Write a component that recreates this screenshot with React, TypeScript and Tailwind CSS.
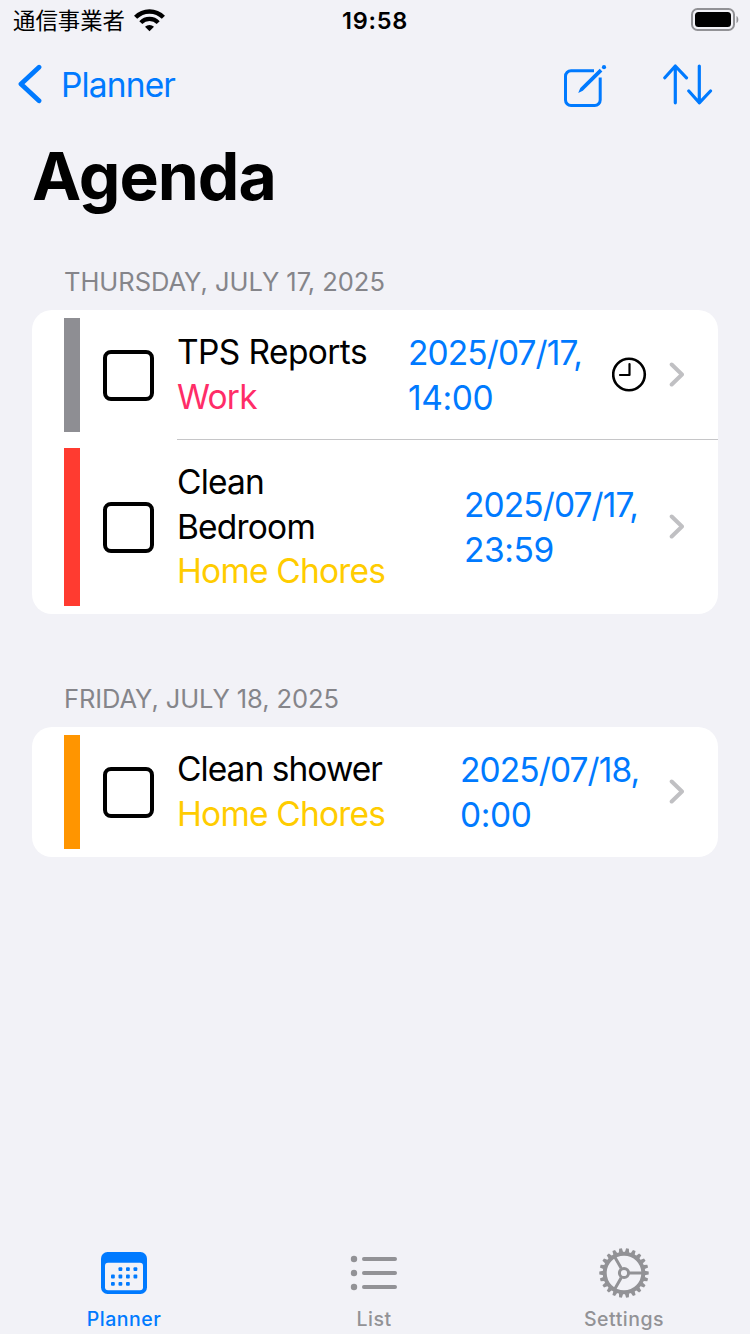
import type { ReactNode } from "react";

type Task = {
  title: string;
  list: string;
  listColor: string;
  barColor: string;
  titleWidth: string;
  titleTracking: string;
  day: string;
  time: string;
  hasAlarm?: boolean;
};

type Section = {
  label: string;
  labelClass: string;
  tasks: Task[];
};

const sections: Section[] = [
  {
    label: "THURSDAY, JULY 17, 2025",
    labelClass: "pt-[57px] tracking-[-0.04px]",
    tasks: [
      {
        title: "TPS Reports",
        list: "Work",
        listColor: "text-[#ff2d68]",
        barColor: "bg-[#8e8e93]",
        titleWidth: "w-[231px]",
        titleTracking: "tracking-[-0.6px]",
        day: "2025/07/17,",
        time: "14:00",
        hasAlarm: true,
      },
      {
        title: "Clean Bedroom",
        list: "Home Chores",
        listColor: "text-[#ffcc00]",
        barColor: "bg-[#ff3b30]",
        titleWidth: "w-[287px]",
        titleTracking: "tracking-[-0.8px]",
        day: "2025/07/17,",
        time: "23:59",
      },
    ],
  },
  {
    label: "FRIDAY, JULY 18, 2025",
    labelClass: "pt-[70px] tracking-[-0.1px]",
    tasks: [
      {
        title: "Clean shower",
        list: "Home Chores",
        listColor: "text-[#ffcc00]",
        barColor: "bg-[#ff9500]",
        titleWidth: "w-[283px]",
        titleTracking: "tracking-[-0.95px]",
        day: "2025/07/18,",
        time: "0:00",
      },
    ],
  },
];

const StatusBar = () => (
  <div className="grid h-10 grid-cols-3 items-center">
    <div className="flex items-center gap-[9px] pl-[13px]">
      <span className="pb-0.5 font-['Noto_Sans_CJK_JP',sans-serif] text-[22.4px] leading-9">
        通信事業者
      </span>
      <svg width="31" height="23" viewBox="0 0 31 23" fill="none">
        <path d="M1.6 8.3a19.4 19.4 0 0 1 27.8 0" stroke="#000" strokeWidth="4.4" />
        <path d="M6.8 13.6a12.1 12.1 0 0 1 17.4 0" stroke="#000" strokeWidth="4.2" />
        <path d="M11 17.7a6.5 6.5 0 0 1 9 0L15.500 22.200z" fill="#000" />
      </svg>
    </div>
    <span className="pt-0.5 text-center text-[23.5px] font-semibold tracking-[0.7px]">
      19:58
    </span>
    <div className="flex justify-end pr-[11px]">
      <svg width="48" height="24" viewBox="0 0 48 24" fill="none">
        <rect x="1" y="1" width="42" height="21" rx="5.5" stroke="#929296" strokeWidth="2" />
        <rect x="4" y="4" width="36" height="15" rx="3.5" fill="#000" />
        <path d="M45.5 8c2.4 1.2 2.4 6 0 7.2z" fill="#929296" />
      </svg>
    </div>
  </div>
);

const NavBar = () => (
  <div className="flex h-[88px] items-center justify-between pr-[37px] pl-[18px] text-[#007aff]">
    <div className="flex items-center gap-[19px]">
      <svg width="24" height="40" viewBox="0 0 24 40" fill="none">
        <path
          d="M21 3.2 3 20l18 16.8"
          stroke="currentColor"
          strokeWidth="4.8"
          strokeLinecap="round"
          strokeLinejoin="round"
        />
      </svg>
      <span className="pt-0.5 text-[33.5px] leading-10 tracking-[-0.85px]">
        Planner
      </span>
    </div>
    <div className="flex items-center gap-[56px]">
      {/* compose */}
      <svg
        width="44"
        height="48"
        viewBox="0 0 44 48"
        fill="none"
        stroke="currentColor"
        strokeWidth="3"
      >
        <path d="M31 10.8H8a5.5 5.5 0 0 0-5.5 5.5V40a5.5 5.5 0 0 0 5.5 5.5h23.7a5.5 5.5 0 0 0 5.5-5.5V17.5" />
        <path
          d="m36.7 8.7 2.7 2.7L19.8 30.8l-4.6 2.1 2.1-4.8z"
          fill="currentColor"
          stroke="none"
        />
        <circle cx="41" cy="7.2" r="2.1" fill="currentColor" stroke="none" />
      </svg>
      {/* sort */}
      <svg
        width="50"
        height="42"
        viewBox="0 0 50 42"
        fill="none"
        stroke="currentColor"
        strokeWidth="3.2"
        strokeLinecap="round"
        strokeLinejoin="round"
      >
        <path d="M12.3 39.8V3M1.8 14.8 12.3 3l11.2 11.8" />
        <path d="M36.3 3v36.8M25.8 28l10.5 11.8L47.5 28" />
      </svg>
    </div>
  </div>
);

const Checkbox = () => (
  <div className="mt-px ml-[23px] size-[51px] shrink-0 rounded-[8px] border-4 border-black" />
);

const ClockIcon = () => (
  <svg
    className="mb-px ml-[30px]"
    width="35"
    height="35"
    viewBox="0 0 35 35"
    fill="none"
    stroke="#000"
    strokeWidth="2.6"
  >
    <circle cx="17" cy="17.5" r="15.8" />
    <path
      d="M17.5 7v11H8"
      strokeWidth="2.2"
      strokeLinecap="round"
      strokeLinejoin="round"
    />
  </svg>
);

const ChevronIcon = () => (
  <svg className="mb-px ml-auto" width="15" height="25" viewBox="0 0 15 25" fill="none">
    <path
      d="m2.7 2.5 10.3 10-10.300 10"
      stroke="#c0c0c3"
      strokeWidth="4"
      strokeLinecap="round"
      strokeLinejoin="round"
    />
  </svg>
);

const TaskRow = ({ task, divided }: { task: Task; divided: boolean }) => (
  <div className="flex min-h-[130px] items-stretch py-2 pl-8">
    <div className={`w-4 shrink-0 ${task.barColor}`} />
    <div className="flex items-center">
      <Checkbox />
    </div>
    {/* the divider starts at the title and runs to the card's edge */}
    <div
      className={`-my-2 ml-[23px] flex grow items-center pr-[34px] text-[33.5px] ${
        divided ? "shadow-[inset_0_-1px_0_#c6c6c8]" : ""
      }`}
    >
      <div className={`shrink-0 py-5 leading-[44.7px] ${task.titleWidth}`}>
        <p className={`max-w-[220px] ${task.titleTracking}`}>{task.title}</p>
        <p className={`tracking-[-0.8px] ${task.listColor}`}>{task.list}</p>
      </div>
      <div className="pt-0.5 leading-[45px] text-[#007aff]">
        <p className="tracking-[-0.9px]">{task.day}</p>
        <p className="tracking-[-0.4px]">{task.time}</p>
      </div>
      {task.hasAlarm && <ClockIcon />}
      <ChevronIcon />
    </div>
  </div>
);

const CalendarIcon = () => (
  <svg width="46" height="42" viewBox="0 0 46 42">
    <rect width="46" height="42" rx="6.5" fill="#007aff" />
    <rect x="4" y="10.7" width="38" height="27.5" rx="3" fill="#f2f2f7" />
    <g fill="#007aff">
      {[17.5, 25, 32.5].map((x) => (
        <rect key={x} x={x} y="15.2" width="3.8" height="3.8" rx="1" />
      ))}
      {[10, 17.5, 25, 32.5].map((x) => (
        <rect key={x} x={x} y="22.6" width="3.8" height="3.8" rx="1" />
      ))}
      {[10, 17.5, 25].map((x) => (
        <rect key={x} x={x} y="30" width="3.8" height="3.8" rx="1" />
      ))}
    </g>
  </svg>
);

const ListIcon = () => (
  <svg width="48" height="36" viewBox="0 0 48 36" fill="#929296">
    {[4, 18, 32].map((y) => (
      <g key={y}>
        <circle cx="4" cy={y} r="3.2" />
        <rect x="12" y={y - 1.9} width="35" height="3.8" rx="1.9" />
      </g>
    ))}
  </svg>
);

const TEETH = 22;

const GearIcon = () => (
  <svg width="50" height="50" viewBox="-25 -25 50 50" fill="none" stroke="#929296">
    <circle r="19.3" strokeWidth="4" />
    {Array.from({ length: TEETH }, (_, i) => (
      <path
        key={i}
        d="M-2.2-20.5h4.4L1.4-24.7h-2.8z"
        fill="#929296"
        stroke="none"
        transform={`rotate(${90 + (i * 360) / TEETH})`}
      />
    ))}
    <circle r="4.6" strokeWidth="3" />
    <path d="M5.5 0H19M-2.8-4.8-9.5-16.4M-2.8 4.8-9.5 16.4" strokeWidth="3" />
  </svg>
);

const TabItem = ({
  label,
  icon,
  active,
}: {
  label: string;
  icon: ReactNode;
  active?: boolean;
}) => (
  <div
    className={`flex w-[248px] flex-col items-center ${
      active ? "text-[#007aff]" : "text-[#929296]"
    }`}
  >
    <div className="flex h-[50px] items-center">{icon}</div>
    <span className="mt-[9px] text-[19.5px] leading-6 font-medium tracking-[0.5px]">
      {label}
    </span>
  </div>
);

const App = () => {
  return (
    <div className="flex h-[1334px] w-[750px] flex-col overflow-hidden bg-[#f2f2f7] font-['Inter',sans-serif] text-black">
      <StatusBar />
      <NavBar />
      <h1 className="pl-8 text-[66px] leading-[96px] font-bold tracking-[-1px]">
        Agenda
      </h1>

      <main className="grow px-8">
        {sections.map((section, i) => (
          <section key={section.label} className={i === 0 ? "-mt-[14px]" : ""}>
            <h2
              className={`pb-[13px] pl-8 text-[25.5px] leading-[30px] text-[#85858a] ${section.labelClass}`}
            >
              {section.label}
            </h2>
            <div className="overflow-hidden rounded-[20px] bg-white">
              {section.tasks.map((task, j) => (
                <TaskRow
                  key={task.title}
                  task={task}
                  divided={j < section.tasks.length - 1}
                />
              ))}
            </div>
          </section>
        ))}
      </main>

      <nav className="flex h-[86px] justify-center gap-[2px] pr-[2px]">
        <TabItem label="Planner" icon={<CalendarIcon />} active />
        <TabItem label="List" icon={<ListIcon />} />
        <TabItem label="Settings" icon={<GearIcon />} />
      </nav>
    </div>
  );
};

export default App;
